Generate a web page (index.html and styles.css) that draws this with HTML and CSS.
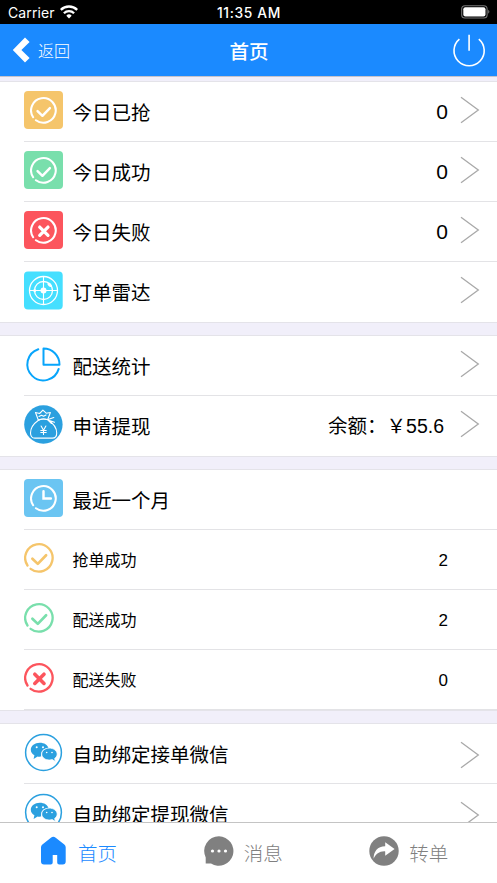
FILE: index.html
```html
<!DOCTYPE html>
<html lang="zh-CN">
<head>
<meta charset="utf-8">
<title>首页</title>
<link rel="stylesheet" href="styles.css">
</head>
<body>
<svg class="defs" aria-hidden="true">
  <symbol id="arrow" viewBox="0 0 20 28"><path d="M1 1.2 18.3 14 1 26.8" fill="none" stroke="#a9a9a9" stroke-width="1.3"/></symbol>
  <symbol id="ring" viewBox="0 0 30 30"><path d="M3.500 22.500A13.700 13.700 0 1 1 6.600 25.800" fill="none" stroke="currentColor" stroke-width="2.300" stroke-linecap="round"/></symbol>
  <symbol id="check" viewBox="0 0 30 30"><use href="#ring"/><path d="m8.400 15.700 5.400 5.200 8.300-8.600" fill="none" stroke="currentColor" stroke-width="2.700" stroke-linecap="round" stroke-linejoin="round"/></symbol>
  <symbol id="cross" viewBox="0 0 30 30"><use href="#ring"/><path d="m10.800 11.200 9.200 9.200m0-9.200-9.200 9.200" fill="none" stroke="currentColor" stroke-width="3.600" stroke-linecap="round"/></symbol>
  <symbol id="clock" viewBox="0 0 30 30"><use href="#ring"/><path d="M15 7v8h8.200" fill="none" stroke="currentColor" stroke-width="2.700" stroke-linecap="round"/></symbol>
  <symbol id="wechat" viewBox="0 0 39 39">
    <circle cx="19.500" cy="19.500" r="17.900" fill="#fff" stroke="#2ba0df" stroke-width="1.500"/>
    <path d="M15.800 9.700c-5 0-9 3.100-9 7 0 2.500 1.500 4.400 3.600 5.600l-.8 3.600 4-2.400c.8.2 2 .3 3.600.1-1.100-5.200 2.600-8.400 7.300-8.500-.8-3.200-4.300-5.400-8.700-5.400Z" fill="#2ba0df"/>
    <path d="M25.200 15.100c-4.200 0-7.500 2.700-7.500 6 0 3.400 3.600 6.200 8 5.900.9 0 1.700-.2 2.500-.4l3.200 2-.7-3.200c1.500-1.100 2.500-2.600 2.500-4.300 0-3.300-3.600-6-8-6Z" fill="#2ba0df" stroke="#fff" stroke-width=".8"/>
    <g fill="#fff"><circle cx="12.700" cy="14.300" r="1"/><circle cx="19" cy="14.300" r="1"/><circle cx="22.700" cy="19.500" r=".8"/><circle cx="28" cy="19.500" r=".8"/></g>
  </symbol>
</svg>
<div class="screen">
  <div class="status">
    <div class="carrier"><span>Carrier</span>
      <svg width="18" height="14" viewBox="0 0 18 14"><g fill="none" stroke="#fff" stroke-width="2.300"><path d="M.8 4.900a11.600 11.600 0 0 1 16.400 0"/><path d="M3.900 8.300a7.200 7.200 0 0 1 10.200 0"/></g><path d="M9 13.400 6.300 10.700a3.800 3.800 0 0 1 5.400 0Z" fill="#fff"/></svg>
    </div>
    <div class="time">11:35 AM</div>
    <svg class="battery" width="29" height="14" viewBox="0 0 29 14"><rect x=".7" y=".7" width="25.400" height="12.300" rx="3.300" fill="none" stroke="#777" stroke-width="1.100"/><rect x="2.300" y="2.300" width="22.200" height="9.100" rx="2" fill="#fff"/><path d="M27.300 4.800q2 2 0 4Z" fill="#888"/></svg>
  </div>
  <header class="nav">
    <div class="back"><svg width="19" height="26" viewBox="0 0 19 26"><path d="M13 .5 17.600 5l-8.200 8 8.200 8-4.600 4.500L.8 13Z" fill="#fff"/></svg><span>返回</span></div>
    <h1>首页</h1>
    <svg class="power" width="34" height="34" viewBox="0 0 34 34"><path d="M7.400 6.100a15.100 15.100 0 1 0 19.400 0M17.100 1.700v16" fill="none" stroke="#fff" stroke-width="1.600"/></svg>
  </header>
  <main>
    <section>
      <div class="row"><div class="icon tile amber"><svg><use href="#check"/></svg></div><span class="label">今日已抢</span><span class="value">0</span><svg class="arrow"><use href="#arrow"/></svg></div>
      <div class="row"><div class="icon tile green"><svg><use href="#check"/></svg></div><span class="label">今日成功</span><span class="value">0</span><svg class="arrow"><use href="#arrow"/></svg></div>
      <div class="row"><div class="icon tile red"><svg><use href="#cross"/></svg></div><span class="label">今日失败</span><span class="value">0</span><svg class="arrow"><use href="#arrow"/></svg></div>
      <div class="row"><svg class="icon" viewBox="0 0 39 39"><rect y=".5" width="38.700" height="38" rx="4" fill="#45dfff"/><g fill="none" stroke="#fff"><circle cx="19.500" cy="19.500" r="14" stroke-width="1.300"/><circle cx="19.500" cy="19.500" r="9" stroke-width="1.300"/><path d="M19.500 5v29M5 19.500h29" stroke-width="1.100"/></g><circle cx="19.500" cy="19.500" r="3" fill="#fff"/><circle cx="10.700" cy="19.500" r="1.500" fill="#fff"/><ellipse cx="25.700" cy="13.800" rx="2.700" ry="1.600" fill="#fff" transform="rotate(43 25.700 13.800)"/></svg><span class="label">订单雷达</span><svg class="arrow"><use href="#arrow"/></svg></div>
    </section>
    <section>
      <div class="row"><svg class="icon" viewBox="0 0 39 39" fill="none" stroke="#08a5fb" stroke-width="2"><path d="M14.300 4.200A16 16 0 1 0 34.700 23.900" stroke-linecap="round"/><path d="M19.500 3.500v16.200h16A16 16 0 0 0 19.500 3.500Z" stroke-linejoin="round"/></svg><span class="label">配送统计</span><svg class="arrow"><use href="#arrow"/></svg></div>
      <div class="row money"><svg class="icon" viewBox="0 0 39 39"><circle cx="19.400" cy="19.500" r="19.200" fill="#2ba0df"/><g fill="none" stroke="#fff" stroke-width="1.100" stroke-linecap="round" stroke-linejoin="round"><path d="M14.400 15.200 11.500 7.500l4.100 1 3.300-3.300 3.300 3 4.200-.7-2.800 7.300q-4.500-1.800-9.200.4Z"/><path d="M14.400 15.200q5-2.300 9.600-.4c5 3.400 8.700 8.300 8.700 13.100 0 3.400-1.700 5.200-4.400 5.200H10.900c-2.800 0-4.400-1.900-4.400-5.200 0-4.600 3-9.200 7.900-12.700ZM24 14.500l5.800-2M24 15l6.500 2.300M24 15l3.500 3.500M15 11.500l2.500-1.200 2 1 2.500-1.300"/><path d="m17.100 21 2.400 4.200 2.400-4.200m-2.400 4.200v4.300m-2.700-4h5.400m-5.400 2h5.400"/></g></svg><span class="label">申请提现</span><span class="value">余额&#xFF1A;&#xFFE5;55.6</span><svg class="arrow"><use href="#arrow"/></svg></div>
    </section>
    <section>
      <div class="row"><div class="icon tile sky"><svg><use href="#clock"/></svg></div><span class="label">最近一个月</span></div>
      <div class="row sub"><svg class="icon amber-line"><use href="#check"/></svg><span class="label">抢单成功</span><span class="value">2</span></div>
      <div class="row sub"><svg class="icon green-line"><use href="#check"/></svg><span class="label">配送成功</span><span class="value">2</span></div>
      <div class="row sub"><svg class="icon red-line"><use href="#cross"/></svg><span class="label">配送失败</span><span class="value">0</span></div>
    </section>
    <section>
      <div class="row wx"><svg class="icon"><use href="#wechat"/></svg><span class="label">自助绑定接单微信</span><svg class="arrow"><use href="#arrow"/></svg></div>
      <div class="row wx"><svg class="icon"><use href="#wechat"/></svg><span class="label">自助绑定提现微信</span><svg class="arrow"><use href="#arrow"/></svg></div>
    </section>
  </main>
  <nav class="tabs">
    <div class="tab active"><svg width="30" height="30" viewBox="0 0 30 30"><path d="M12.900 1.700q2.400-1.800 4.800 0l8.600 6.700q1.400 1.100 1.400 2.800v14.300q0 3-3 3h-3.500q-2 0-2-2v-7.600h-4.500v7.600q0 2-2 2H6q-3 0-3-3V11.200q0-1.700 1.400-2.800Z" fill="currentColor"/></svg><span>首页</span></div>
    <div class="tab"><svg width="30" height="30" viewBox="0 0 30 30"><path d="M15 .3a14.700 14.700 0 1 1-8 27.200H1.700v-6A14.700 14.700 0 0 1 15 .3Z" fill="currentColor"/><g fill="#fff"><circle cx="8.500" cy="15" r="1.600"/><circle cx="15" cy="15" r="1.600"/><circle cx="21.500" cy="15" r="1.600"/></g></svg><span>消息</span></div>
    <div class="tab"><svg width="30" height="30" viewBox="0 0 30 30"><circle cx="15" cy="15" r="14.700" fill="currentColor"/><path d="M16.200 6.200 25.600 12.900 16.200 19.700v-4.300C10.500 15 7 18 4.600 22.800 4.600 15.500 8.500 10.500 16.200 10.300Z" fill="#fff"/></svg><span>转单</span></div>
  </nav>
</div>
</body>
</html>
```
FILE: styles.css
```css
* { box-sizing: border-box; }
body { margin: 0; font-family: "Liberation Sans", "Noto Sans CJK SC", sans-serif; font-weight: 400; color: #000; }
svg { display: block; flex: none; }
.defs { position: absolute; width: 0; height: 0; }
.screen { height: 883px; display: flex; flex-direction: column; overflow: hidden; background: #f1effa; }

.status { height: 24px; flex: none; display: grid; grid-template-columns: 1fr auto 1fr; align-items: center; padding: 2px 7px 0 8px; background: #000; color: #fff; font: 400 14px/20px Inter, sans-serif; }
.carrier { display: flex; align-items: center; gap: 5px; letter-spacing: .1px; }
.carrier svg { margin-top: -2px; }
.time { font-size: 13.800px; font-weight: 500; letter-spacing: .65px; }
.battery { justify-self: end; margin-top: -2px; }

.nav { height: 53px; flex: none; display: grid; grid-template-columns: 1fr auto 1fr; align-items: center; padding: 0 11px 0 12px; background: #1b8aff; border-bottom: 1px solid #c5c3cc; color: #fff; }
.back { display: flex; align-items: center; gap: 7px; font-size: 16px; line-height: 24px; font-weight: 300; }
.back span { padding-top: 4px; }
.nav h1 { margin: 0; padding-top: 3px; font-size: 19.500px; line-height: 28px; font-weight: 500; }
.power { justify-self: end; }

main { flex: 1; min-height: 0; overflow: hidden; padding-top: 4px; display: flex; flex-direction: column; gap: 12px; }
section { flex: none; background: #fff; border-top: 1px solid #e4e3e9; border-bottom: 1px solid #e4e3e9; }
.row { height: 60px; margin-left: 24px; padding: 0 17px 3px 0; display: flex; align-items: center; border-bottom: 1px solid #e3e3e6; font-size: 19.500px; line-height: 28px; }
.row:last-child { border-bottom-color: transparent; }
.icon { width: 39px; height: 39px; margin-right: 9.500px; flex: none; }
.tile { height: 38px; border-radius: 4px; color: #fff; display: flex; align-items: center; justify-content: center; }
.tile svg { width: 27px; height: 27px; }
.amber { background: #f5c56b; }
.green { background: #79dfac; }
.red { background: #fc555d; }
.sky { background: #6bc5f2; }
.amber-line { color: #f5c56b; }
.green-line { color: #79dfac; }
.red-line { color: #fc555d; }
.label { padding-top: 5px; }
.value { margin-left: auto; padding-top: 4px; font-size: 21px; }
.arrow { width: 20px; height: 28px; margin-left: auto; }
.value + .arrow { margin-left: 12px; }
.money .value { font-size: 19.500px; }
.money .value + .arrow { margin-left: 16px; }
.sub { padding-right: 49px; font-size: 16px; }
.sub:last-child { border-bottom-color: #e3e3e6; }
.sub .icon { width: 30px; height: 30px; margin-right: 18.500px; }
.sub .label { padding-top: 5px; }
.sub .value { font-size: 17px; padding-top: 5px; }
.wx .arrow { position: relative; top: 3px; }

.tabs { height: 61px; flex: none; display: flex; border-top: 1px solid #c4c4c4; background: #fff; color: #808080; font-size: 19.500px; line-height: 28px; font-weight: 300; }
.tab { flex: 1; display: flex; align-items: center; gap: 10px; padding: 0 0 4px 38px; }
.tab span { padding-top: 5px; }
.active { color: #1b8aff; }
```
